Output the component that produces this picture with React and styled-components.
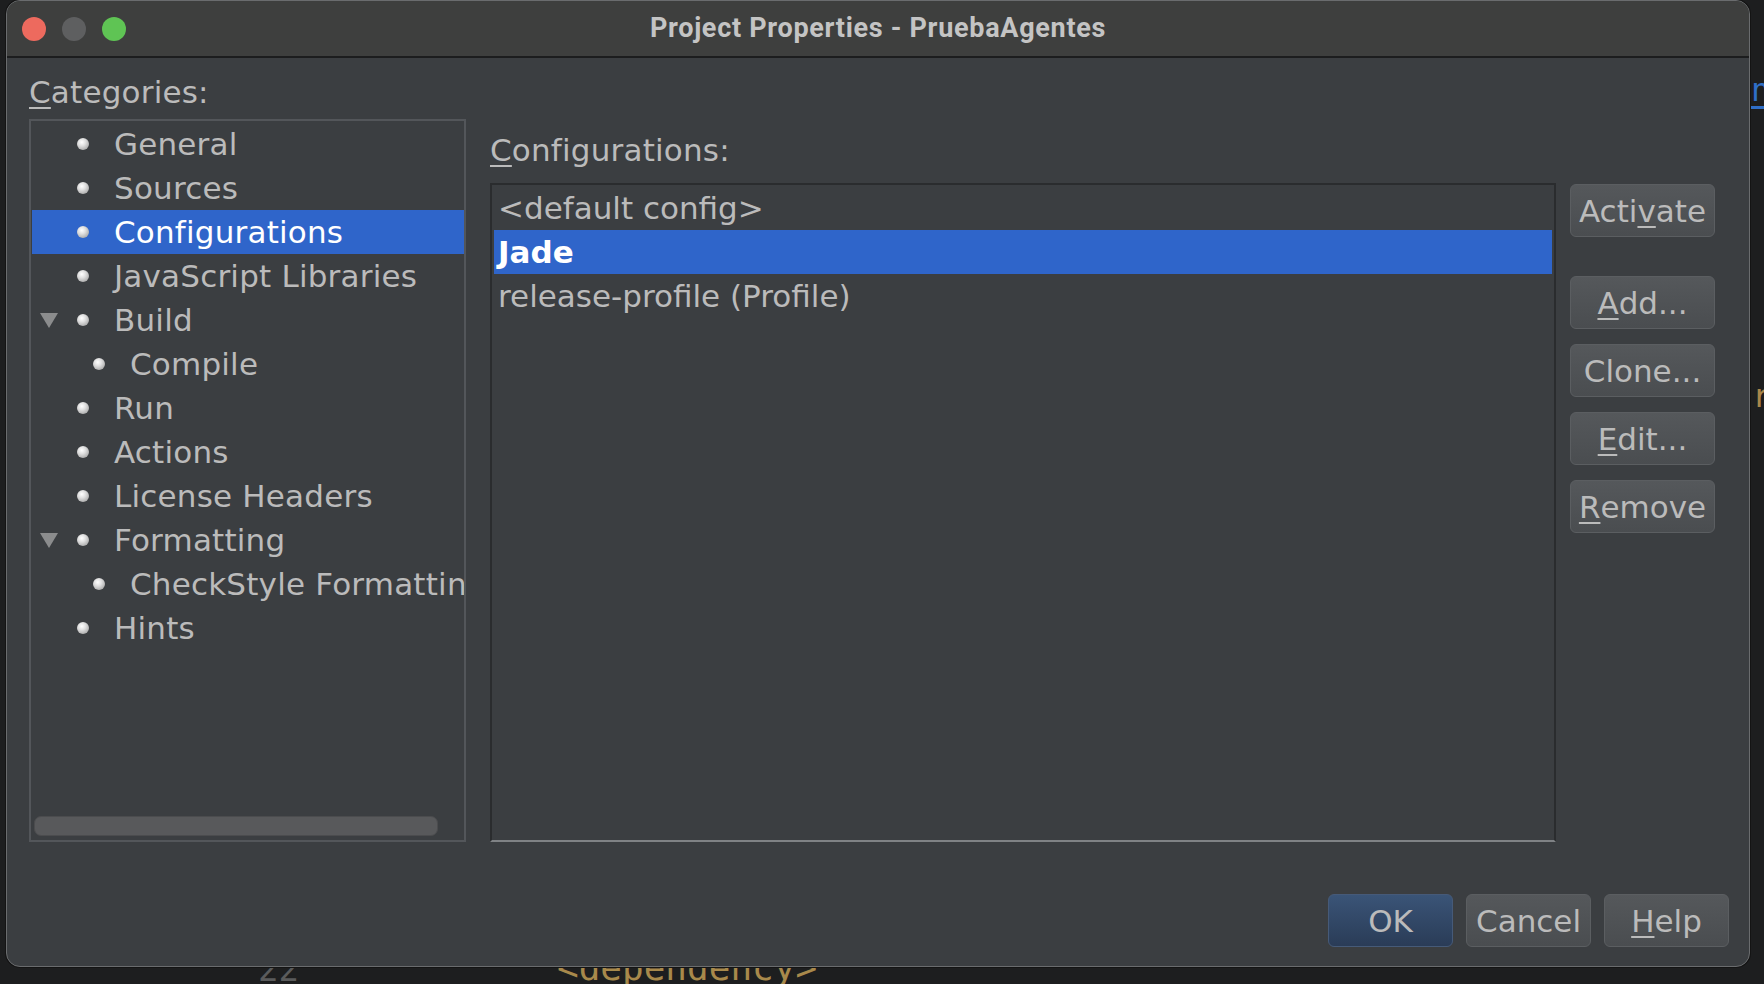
import React from "react";
import styled, { createGlobalStyle } from "styled-components";

const uiFont = `"DejaVu Sans", "Liberation Sans", sans-serif`;
const textColor = "#bbbbbb";
const panelBg = "#3b3e41";
const selectBg = "#2f65ca";

const GlobalStyle = createGlobalStyle`
  html, body {
    margin: 0;
    padding: 0;
    background: #1d1e1f;
  }
  body {
    font-family: ${uiFont};
  }
  * {
    box-sizing: border-box;
  }
`;

const Screen = styled.div`
  position: relative;
  width: 1764px;
  height: 984px;
  overflow: hidden;
  background: #1d1e1f;
  padding-left: 6px;
`;

const EditorGlyph = styled.span`
  position: absolute;
  left: ${(p) => p.x}px;
  top: ${(p) => p.y}px;
  font-family: "DejaVu Sans Mono", monospace;
  font-size: ${(p) => p.size || 36}px;
  line-height: 1;
  color: ${(p) => p.color};
  white-space: pre;
  text-decoration: ${(p) => (p.underline ? "underline" : "none")};
  text-underline-offset: 5px;
`;

const Window = styled.div`
  position: relative;
  z-index: 1;
  width: 1744px;
  height: 967px;
  border: 1px solid #6a6c6e;
  border-radius: 14px;
  background: ${panelBg};
  display: flex;
  flex-direction: column;
  overflow: hidden;
  box-shadow: 0 0 0 1px #141414;
`;

const TitleBar = styled.div`
  height: 57px;
  flex-shrink: 0;
  display: grid;
  grid-template-columns: 1fr auto 1fr;
  align-items: center;
  background: #3e3f3e;
  border-bottom: 2px solid #1c1d1e;
  padding: 0 15px;
`;

const Lights = styled.div`
  display: flex;
  gap: 16px;
`;

const Light = styled.span`
  width: 24px;
  height: 24px;
  border-radius: 50%;
  background: ${(p) => p.color};
`;

const Title = styled.div`
  font-family: Roboto, "Liberation Sans", sans-serif;
  font-weight: 700;
  font-size: 27px;
  color: #c4c4c4;
  letter-spacing: 0.7px;
  margin-top: -2px;
`;

const Body = styled.div`
  flex: 1;
  display: flex;
  flex-direction: column;
  padding: 16px 20px 19px 22px;
`;

const Main = styled.div`
  flex: 1;
  display: flex;
  min-height: 0;
`;

const LeftCol = styled.div`
  width: 437px;
  display: flex;
  flex-direction: column;
`;

const RightCol = styled.div`
  flex: 1;
  display: flex;
  flex-direction: column;
  margin-left: 24px;
  padding-top: 58px;
  min-width: 0;
`;

const Label = styled.div`
  font-size: 31px;
  line-height: 36px;
  height: 36px;
  color: ${textColor};
  margin-bottom: ${(p) => p.gap}px;
  white-space: nowrap;
  letter-spacing: 0.2px;
`;

const Key = styled.span`
  text-decoration: underline;
  text-decoration-thickness: 2px;
  text-underline-offset: 4px;
`;

const TreePanel = styled.div`
  flex: 1;
  display: flex;
  flex-direction: column;
  border: 2px solid #53565a;
  padding: 1px 0 0 1px;
  overflow: hidden;
`;

const TreeList = styled.div`
  flex: 1;
`;

const TreeRow = styled.div`
  height: 44px;
  display: flex;
  align-items: center;
  padding-left: ${(p) => 8 + p.depth * 16}px;
  background: ${(p) => (p.selected ? selectBg : "transparent")};
  color: ${(p) => (p.selected ? "#ffffff" : textColor)};
  font-size: 31px;
  letter-spacing: 0.2px;
  white-space: nowrap;
  overflow: hidden;
`;

const Toggle = styled.span`
  width: 18px;
  height: 15px;
  flex-shrink: 0;
  display: flex;
  justify-content: center;
  &::before {
    content: "";
    display: ${(p) => (p.open ? "block" : "none")};
    border-left: 9px solid transparent;
    border-right: 9px solid transparent;
    border-top: 15px solid #8b8c8d;
  }
`;

const Bullet = styled.span`
  width: 12px;
  height: 12px;
  flex-shrink: 0;
  margin-left: 19px;
  margin-right: 25px;
  border-radius: 50%;
  background: radial-gradient(circle at 40% 35%, #ffffff 0%, #e0e0e0 35%, #8f8f8f 100%);
`;

const ScrollTrack = styled.div`
  padding: 0 26px 4px 2px;
`;

const ScrollThumb = styled.div`
  height: 20px;
  border-radius: 7px;
  background: #58595b;
  border: 1px solid #4b4c4e;
`;

const ConfigArea = styled.div`
  flex: 1;
  display: flex;
  align-items: flex-start;
  min-height: 0;
`;

const ConfigList = styled.div`
  flex: 1;
  align-self: stretch;
  border: 2px solid #2a2c2e;
  border-bottom-color: #7f8285;
  padding: 1px 2px 0 2px;
`;

const ConfigRow = styled.div`
  height: 44px;
  display: flex;
  align-items: center;
  padding-left: 4px;
  font-size: 31px;
  font-weight: ${(p) => (p.selected ? 700 : 400)};
  color: ${(p) => (p.selected ? "#ffffff" : textColor)};
  background: ${(p) => (p.selected ? selectBg : "transparent")};
  white-space: nowrap;
`;

const SideButtons = styled.div`
  width: 145px;
  margin: 1px 14px 0 14px;
  display: flex;
  flex-direction: column;
  gap: 15px;
`;

const Button = styled.button`
  width: ${(p) => p.width || 145}px;
  height: 53px;
  margin-bottom: ${(p) => p.after || 0}px;
  border-radius: 6px;
  border: 1px solid ${(p) => (p.primary ? "#465a78" : "#5b5e61")};
  background: ${(p) =>
    p.primary
      ? "linear-gradient(#3a5477, #2a3c57)"
      : "linear-gradient(#55585b, #4a4d50)"};
  color: ${textColor};
  font-family: ${uiFont};
  font-size: 31px;
  padding: 0;
  display: flex;
  align-items: center;
  justify-content: center;
  white-space: nowrap;
`;

const Footer = styled.div`
  height: 53px;
  margin-top: 52px;
  display: flex;
  justify-content: flex-end;
  gap: 13px;
`;

const tree = [
  { label: "General", depth: 0 },
  { label: "Sources", depth: 0 },
  { label: "Configurations", depth: 0, selected: true },
  { label: "JavaScript Libraries", depth: 0 },
  { label: "Build", depth: 0, open: true },
  { label: "Compile", depth: 1 },
  { label: "Run", depth: 0 },
  { label: "Actions", depth: 0 },
  { label: "License Headers", depth: 0 },
  { label: "Formatting", depth: 0, open: true },
  { label: "CheckStyle Formatting", depth: 1 },
  { label: "Hints", depth: 0 },
];

const configs = [
  { label: "<default config>" },
  { label: "Jade", selected: true },
  { label: "release-profile (Profile)" },
];

export default function App() {
  return (
    <Screen>
      <GlobalStyle />
      <EditorGlyph x={1751} y={74} size={32} color="#2f6fc8" underline>
        n
      </EditorGlyph>
      <EditorGlyph x={1752} y={380} size={32} color="#a8874a">
        r
      </EditorGlyph>
      <EditorGlyph x={258} y={952} size={34} color="#5a5b5c">
        22
      </EditorGlyph>
      <EditorGlyph x={557} y={950} color="#a8894b">
        {"<dependency>"}
      </EditorGlyph>

      <Window>
        <TitleBar>
          <Lights>
            <Light color="#ed6a5e" />
            <Light color="#5e5f60" />
            <Light color="#5fc454" />
          </Lights>
          <Title>Project Properties - PruebaAgentes</Title>
          <span />
        </TitleBar>

        <Body>
          <Main>
            <LeftCol>
              <Label gap={9}>
                <Key>C</Key>ategories:
              </Label>
              <TreePanel>
                <TreeList>
                  {tree.map((item) => (
                    <TreeRow key={item.label} depth={item.depth} selected={item.selected}>
                      <Toggle open={item.open} />
                      <Bullet />
                      {item.label}
                    </TreeRow>
                  ))}
                </TreeList>
                <ScrollTrack>
                  <ScrollThumb />
                </ScrollTrack>
              </TreePanel>
            </LeftCol>

            <RightCol>
              <Label gap={15}>
                <Key>C</Key>onfigurations:
              </Label>
              <ConfigArea>
                <ConfigList>
                  {configs.map((c) => (
                    <ConfigRow key={c.label} selected={c.selected}>
                      {c.label}
                    </ConfigRow>
                  ))}
                </ConfigList>
                <SideButtons>
                  <Button after={24}>
                    Acti<Key>v</Key>ate
                  </Button>
                  <Button>
                    <Key>A</Key>dd...
                  </Button>
                  <Button>Clone...</Button>
                  <Button>
                    <Key>E</Key>dit...
                  </Button>
                  <Button>
                    <Key>R</Key>emove
                  </Button>
                </SideButtons>
              </ConfigArea>
            </RightCol>
          </Main>

          <Footer>
            <Button width={125} primary>
              OK
            </Button>
            <Button width={125}>Cancel</Button>
            <Button width={125}>
              <Key>H</Key>elp
            </Button>
          </Footer>
        </Body>
      </Window>
    </Screen>
  );
}
